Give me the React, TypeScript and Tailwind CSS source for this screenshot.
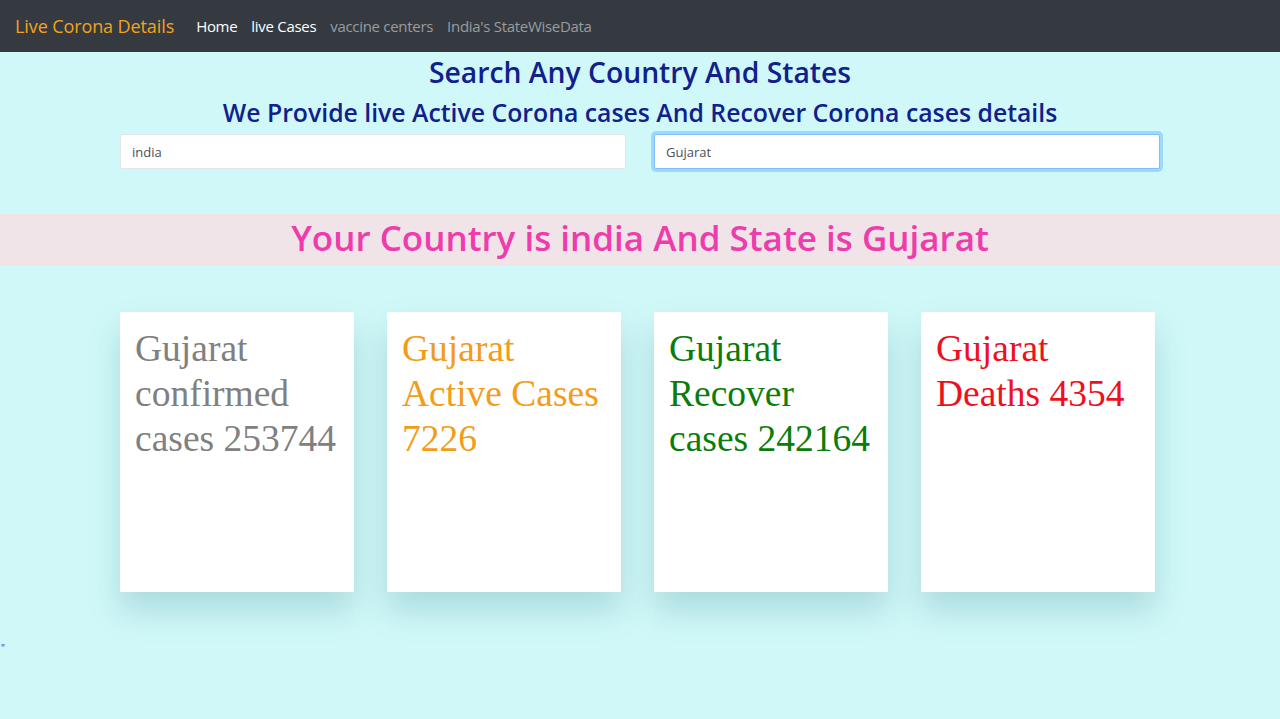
import React from 'react';

const cards = [
  { text: 'Gujarat confirmed cases 253744', color: 'text-[#808080]' },
  { text: 'Gujarat Active Cases 7226', color: 'text-[#f39c18]' },
  { text: 'Gujarat Recover cases 242164', color: 'text-[#0a7c0a]' },
  { text: 'Gujarat Deaths 4354', color: 'text-[#ee1020]' },
];

const sans = "font-['Open_Sans','Noto_Sans',sans-serif]";

export default function App() {
  return (
    <div className={`min-h-[719px] bg-[#d0f8f8] ${sans}`}>
      {/* navbar */}
      <nav className="h-[52px] bg-[#343a40] flex items-center px-[15px]">
        <span className="text-[18px] text-[#f5a31c] tracking-[-0.1px] mr-[15px]">Live Corona Details</span>
        <div className="flex items-center text-[15px] tracking-[-0.3px]">
          <a className="px-[7px] text-white">Home</a>
          <a className="px-[7px] text-white">live Cases</a>
          <a className="px-[7px] text-[#9a9c9f]">vaccine centers</a>
          <a className="px-[7px] text-[#9a9c9f]">India's StateWiseData</a>
        </div>
      </nav>

      {/* search */}
      <div className="text-center text-[#10208c]">
        <h1 className="text-[28.3px] font-semibold leading-[38px] pt-[1px] pb-[1px]">Search Any Country And States</h1>
        <h2 className="text-[24.8px] font-semibold leading-[40px]">
          We Provide live Active Corona cases And Recover Corona cases details
        </h2>
      </div>
      <div className="mx-[120px] mt-[2px] grid grid-cols-2 gap-[28px]">
        <input
          defaultValue="india"
          className="h-[35px] bg-white border border-[#e3e6e8] rounded-[2px] px-[11px] text-[13px] text-[#495057] outline-none"
        />
        <input
          defaultValue="Gujarat"
          className="h-[35px] bg-white border border-[#80bdff] rounded-[2px] px-[11px] text-[13px] text-[#495057] outline-none shadow-[0_0_0_3px_rgba(0,123,255,0.25)]"
        />
      </div>

      {/* result band */}
      <div className="mt-[45px] h-[52px] bg-[#f0e4e8] flex items-center justify-center">
        <span className="text-[35px] text-[#ef3cac] font-semibold pb-[3px]">
          Your Country is india And State is Gujarat
        </span>
      </div>

      {/* cards */}
      <div className="ml-[120px] mt-[46px] flex gap-[33px]">
        {cards.map((c) => (
          <div
            key={c.text}
            className="w-[234px] h-[280px] bg-white shadow-[0_18px_30px_rgba(40,120,130,0.22)] px-[15px] pt-[14px]"
          >
            <p className={`font-['Liberation_Serif',serif] text-[37.5px] leading-[45px] ${c.color}`}>{c.text}</p>
          </div>
        ))}
      </div>

      <div className="mt-[51px] pl-[1px] text-[10px] text-[#444] leading-none">"</div>
    </div>
  );
}
